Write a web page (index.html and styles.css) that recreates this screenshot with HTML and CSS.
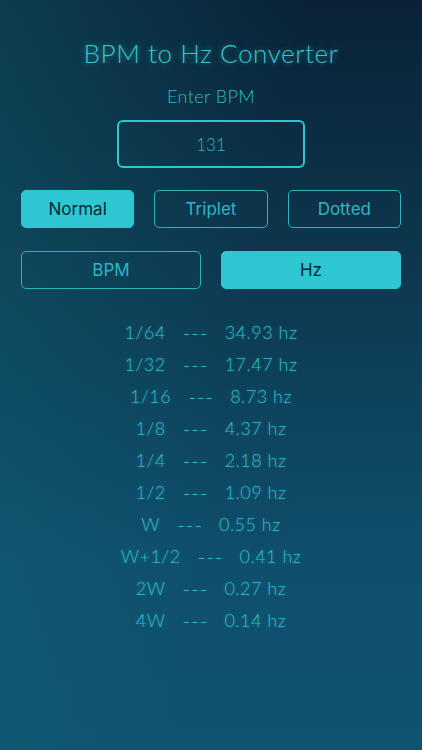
FILE: index.html
```html
<!DOCTYPE html>
<html>
<head>
<meta charset="utf-8">
<link rel="stylesheet" href="styles.css">
</head>
<body>
<div class="app">
  <h1 class="title">BPM to Hz Converter</h1>
  <div class="label">Enter BPM</div>
  <div class="input">131</div>
  <div class="row three">
    <div class="btn on">Normal</div>
    <div class="btn">Triplet</div>
    <div class="btn">Dotted</div>
  </div>
  <div class="row two">
    <div class="btn">BPM</div>
    <div class="btn on">Hz</div>
  </div>
  <div class="list">
    <div class="item"><span>1/64</span><span class="dash">---</span><span>34.93 hz</span></div>
    <div class="item"><span>1/32</span><span class="dash">---</span><span>17.47 hz</span></div>
    <div class="item"><span>1/16</span><span class="dash">---</span><span>8.73 hz</span></div>
    <div class="item"><span>1/8</span><span class="dash">---</span><span>4.37 hz</span></div>
    <div class="item"><span>1/4</span><span class="dash">---</span><span>2.18 hz</span></div>
    <div class="item"><span>1/2</span><span class="dash">---</span><span>1.09 hz</span></div>
    <div class="item"><span>W</span><span class="dash">---</span><span>0.55 hz</span></div>
    <div class="item"><span>W+1/2</span><span class="dash">---</span><span>0.41 hz</span></div>
    <div class="item"><span>2W</span><span class="dash">---</span><span>0.27 hz</span></div>
    <div class="item"><span>4W</span><span class="dash">---</span><span>0.14 hz</span></div>
  </div>
</div>
</body>
</html>
```
FILE: styles.css
```css
html, body {
  margin: 0;
  padding: 0;
}
body {
  width: 422px;
  height: 750px;
  overflow: hidden;
  background:
    linear-gradient(100deg, rgba(16,110,125,0.35) 0%, rgba(16,110,125,0) 55%),
    linear-gradient(180deg, #0a2236 0%, #0d3a52 40%, #0f4f6c 75%, #0f5370 100%);
  font-family: "Lato", "Open Sans", sans-serif;
  color: #30bfca;
}
.app {
  display: flex;
  flex-direction: column;
  align-items: center;
  padding: 36px 21px 0;
}
.title {
  margin: 0;
  font-weight: 300;
  font-size: 26px;
  line-height: 34px;
  letter-spacing: 0.6px;
  color: #38c6d0;
  text-shadow: 0 0 6px rgba(52, 194, 204, 0.55);
}
.label {
  margin-top: 15px;
  font-size: 18px;
  line-height: 22px;
  font-weight: 300;
  letter-spacing: 0.4px;
  color: #2fbbc7;
}
.input {
  margin-top: 13px;
  width: 184px;
  height: 44px;
  border: 2px solid #32c3cd;
  border-radius: 6px;
  display: flex;
  align-items: center;
  justify-content: center;
  font-size: 17px;
  color: #2fb5c2;
  font-weight: 300;
}
.row {
  align-self: stretch;
  display: grid;
  gap: 20px;
}
.row.three {
  margin-top: 22px;
  grid-template-columns: 1fr 1fr 1fr;
}
.row.two {
  margin-top: 23px;
  grid-template-columns: 1fr 1fr;
}
.btn {
  height: 36px;
  border: 1px solid #2ab3bf;
  border-radius: 5px;
  display: flex;
  align-items: center;
  justify-content: center;
  font-family: "Inter", "Roboto", sans-serif;
  font-size: 17px;
  color: #2fb6c4;
}
.btn.on {
  background: #2ec7d1;
  border-color: #2ec7d1;
  color: #0b2535;
}
.list {
  margin-top: 27px;
  display: flex;
  flex-direction: column;
}
.item {
  height: 32px;
  display: flex;
  justify-content: center;
  align-items: center;
  gap: 17px;
  font-size: 18px;
  font-weight: 300;
  letter-spacing: 0.5px;
  color: #31bdca;
  text-shadow: 0 0 4px rgba(47, 185, 198, 0.35);
}
.dash {
  font-size: 21px;
  letter-spacing: 0.8px;
  margin-right: -0.8px;
}
```
